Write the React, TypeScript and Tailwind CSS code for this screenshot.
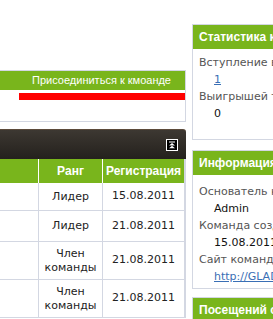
const green = "bg-[#79b51c]";

type Member = { rank: string[]; date: string; h: string };

const members: Member[] = [
  { rank: ["Лидер"], date: "15.08.2011", h: "h-[28px]" },
  { rank: ["Лидер"], date: "21.08.2011", h: "h-[31px]" },
  { rank: ["Член", "команды"], date: "21.08.2011", h: "h-[38px]" },
  { rank: ["Член", "команды"], date: "21.08.2011", h: "h-[38px]" },
];

function CollapseIcon() {
  return (
    <svg width="12" height="12" viewBox="0 0 12 12" className="block">
      <rect x="0.5" y="0.5" width="11" height="11" fill="#000" stroke="#fff" />
      <rect x="3" y="2.5" width="6" height="1" fill="#fff" />
      <path d="M6 4 L9 6.5 L3 6.5 Z" fill="#fff" />
      <path d="M6 6.8 L9 9.3 L3 9.3 Z" fill="#fff" />
    </svg>
  );
}

type Row = { label: string; value: string; link?: boolean };

function SidePanel({ title, rows, body }: { title: string; rows: Row[]; body: string }) {
  return (
    <section className="border border-[#d3d7e2] bg-white">
      <h3 className={`${green} h-[24px] pl-[6px] flex items-center text-[12px] font-bold text-white whitespace-nowrap font-['Liberation_Sans',sans-serif]`}>
        {title}
      </h3>
      <div className={`${body} px-[6px] text-[11px] leading-[17px] whitespace-nowrap`}>
        {rows.map((r) => (
          <div key={r.label}>
            <p className="text-[#555]">{r.label}</p>
            <p className="pl-[15px]">
              {r.link ? (
                <a className="text-[#3a6fb5] underline">{r.value}</a>
              ) : (
                <span className="text-[#111]">{r.value}</span>
              )}
            </p>
          </div>
        ))}
      </div>
    </section>
  );
}

export default function App() {
  return (
    <div className="w-[273px] h-[319px] overflow-hidden bg-white font-['DejaVu_Sans',sans-serif]">
      <div className="flex gap-[6px]">
        <div className="w-[186px] shrink-0 pt-[70px]">
          <div className="border-t border-r border-b border-[#d3d7e2]">
            <div className={`${green} h-[19px] flex items-center justify-end pr-[14px] text-[11px] text-white whitespace-nowrap font-['Liberation_Sans',sans-serif]`}>
              Присоединиться к кмоанде
            </div>
            <div className="h-[31px] pt-[3px] pl-[19px]">
              <div className="h-[7px] bg-[#ff0000]" />
            </div>
          </div>

          <div className="mt-[7px] h-[30px] rounded-tr-[3px] border-t border-[#5b4a3b] bg-gradient-to-b from-[#3d3832] to-[#24211d] flex items-center justify-end pr-[8px]">
            <CollapseIcon />
          </div>

          <div className="border-r-2 border-[#d3d7e2]">
            <div className={`${green} h-[24px] grid grid-cols-[39px_64px_81px] text-[12px] font-bold text-white font-['Liberation_Sans',sans-serif]`}>
              <div className="border-r border-white" />
              <div className="border-r border-white flex items-center justify-center">Ранг</div>
              <div className="flex items-center justify-center">Регистрация</div>
            </div>
            {members.map((m, i) => (
              <div key={i} className={`${m.h} grid grid-cols-[39px_64px_81px] border-b border-[#d3d7e2] text-[11px] text-[#222]`}>
                <div className="border-r border-[#d3d7e2]" />
                <div className="border-r border-[#d3d7e2] flex flex-col items-center justify-center leading-[14px]">
                  {m.rank.map((t) => (
                    <span key={t}>{t}</span>
                  ))}
                </div>
                <div className="flex items-center justify-center">{m.date}</div>
              </div>
            ))}
          </div>
        </div>

        <div className="w-[110px] shrink-0 pt-[24px] flex flex-col">
          <SidePanel
            title="Статистика команды"
            body="pt-[5px] pb-[17px]"
            rows={[
              { label: "Вступление в команду", value: "1", link: true },
              { label: "Выигрышей турниров", value: "0" },
            ]}
          />
          <div className="mt-[10px]">
            <SidePanel
              title="Информация"
              body="pt-[8px] pb-[3px]"
              rows={[
                { label: "Основатель команды", value: "Admin" },
                { label: "Команда создана", value: "15.08.2011" },
                { label: "Сайт команды", value: "http://GLADIATORS.ru", link: true },
              ]}
            />
          </div>
          <section className="mt-[8px] border border-[#d3d7e2]">
            <h3 className={`${green} h-[24px] pl-[6px] flex items-center text-[12px] font-bold text-white whitespace-nowrap font-['Liberation_Sans',sans-serif]`}>
              Посещений сайта
            </h3>
          </section>
        </div>
      </div>
    </div>
  );
}
